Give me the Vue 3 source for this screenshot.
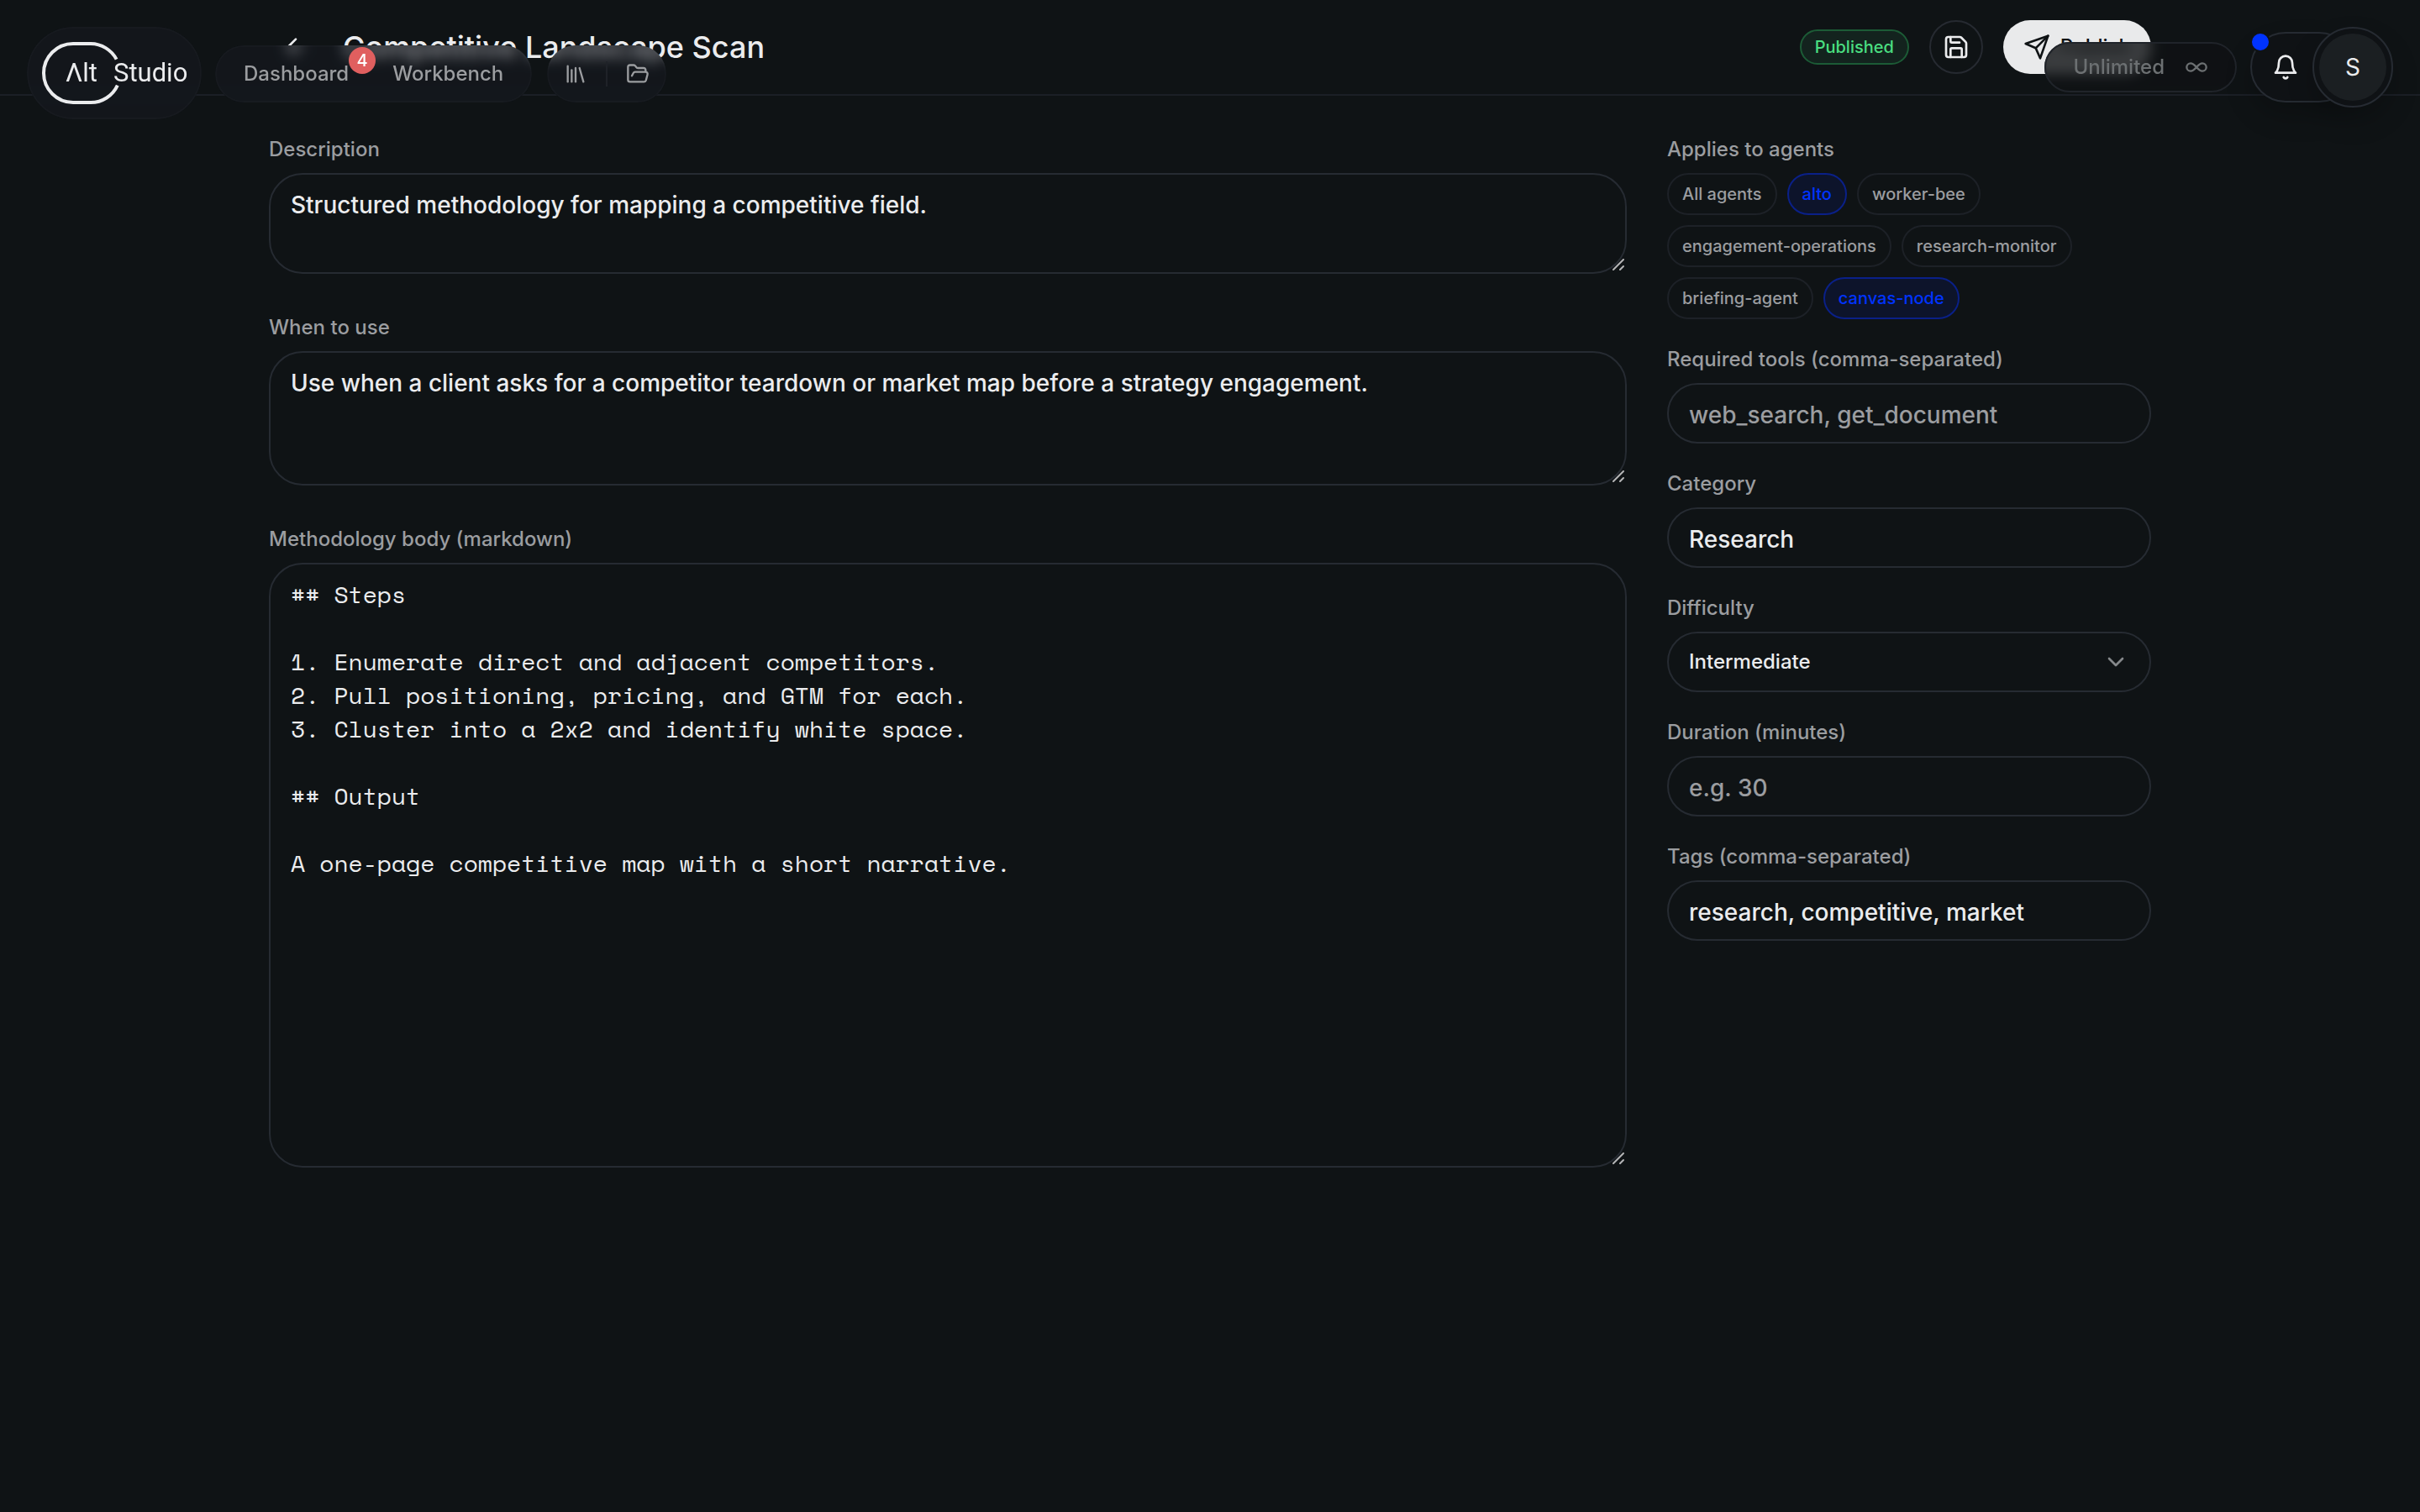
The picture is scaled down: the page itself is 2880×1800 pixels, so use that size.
<template>
  <div class="page">
    <header class="page-header">
      <div class="container header-row">
        <button type="button" class="back-btn" aria-label="Back">
          <svg class="icon-md" viewBox="0 0 24 24"><path d="m12 19-7-7 7-7" /><path d="M19 12H5" /></svg>
        </button>
        <h1 class="title">{{ skill.title }}</h1>
        <span class="status">Published</span>
        <button type="button" class="save-btn" aria-label="Save">
          <svg class="icon-md" viewBox="0 0 24 24">
            <path d="M15.2 3a2 2 0 0 1 1.4.6l3.8 3.8a2 2 0 0 1 .6 1.4V19a2 2 0 0 1-2 2H5a2 2 0 0 1-2-2V5a2 2 0 0 1 2-2z" />
            <path d="M17 21v-7a1 1 0 0 0-1-1H8a1 1 0 0 0-1 1v7" />
            <path d="M7 3v4a1 1 0 0 0 1 1h7" />
          </svg>
        </button>
        <button type="button" class="publish-btn">
          <svg class="icon-md" viewBox="0 0 24 24"><path d="m22 2-7 20-4-9-9-4Z" /><path d="M22 2 11 13" /></svg>
          Publish
        </button>
      </div>
    </header>

    <main class="container editor">
      <section class="main-col">
        <div v-for="area in areas" :key="area.key" class="field">
          <label :for="area.key">{{ area.label }}</label>
          <div class="area-wrap">
            <textarea
              :id="area.key"
              v-model="skill[area.key]"
              :class="'area-' + area.key"
              spellcheck="false"
            ></textarea>
            <svg class="grip" viewBox="0 0 14 14"><path d="M1 13 13 1M9 13l4-4" /></svg>
          </div>
        </div>
      </section>

      <aside class="side-col">
        <div class="field" role="group" aria-labelledby="agents-label">
          <span id="agents-label" class="field-label">Applies to agents</span>
          <div class="chips">
            <button
              v-for="agent in agents"
              :key="agent"
              type="button"
              class="chip"
              :class="{ active: selected.includes(agent) }"
              :aria-pressed="selected.includes(agent)"
              @click="toggleAgent(agent)"
            >{{ agent }}</button>
          </div>
        </div>
        <div class="field">
          <label for="tools">Required tools (comma-separated)</label>
          <input id="tools" v-model="skill.tools" type="text" placeholder="web_search, get_document" />
        </div>
        <div class="field">
          <label for="category">Category</label>
          <input id="category" v-model="skill.category" type="text" />
        </div>
        <div class="field">
          <label for="difficulty">Difficulty</label>
          <div class="select-wrap">
            <select id="difficulty" v-model="skill.difficulty">
              <option v-for="level in levels" :key="level">{{ level }}</option>
            </select>
            <svg class="icon-md chevron" viewBox="0 0 24 24"><path d="m6 9 6 6 6-6" /></svg>
          </div>
        </div>
        <div class="field">
          <label for="duration">Duration (minutes)</label>
          <input id="duration" v-model="skill.duration" type="text" inputmode="numeric" placeholder="e.g. 30" />
        </div>
        <div class="field">
          <label for="tags">Tags (comma-separated)</label>
          <input id="tags" v-model="skill.tags" type="text" />
        </div>
      </aside>
    </main>

    <!-- floating navigation -->
    <div class="float-left">
      <a href="#" class="glass logo">
        <svg viewBox="0 0 204 106">
          <path class="ring" d="M104.6 36.6A35 35 0 0 0 74 18H53a35 35 0 0 0 0 70h21A35 35 0 0 0 105.8 67.6" />
          <text x="44" y="63">Λlt</text>
          <text x="101" y="63">Studio</text>
        </svg>
      </a>
      <div class="float-group">
        <nav class="glass nav">
          <a href="#" class="nav-link">Dashboard<span class="badge">4</span></a>
          <a href="#" class="nav-link">Workbench</a>
        </nav>
        <div class="glass tools">
          <button type="button" class="tool-btn" aria-label="Library">
            <svg class="icon-sm" viewBox="0 0 24 24"><path d="m16 6 4 14" /><path d="M12 6v14" /><path d="M8 8v12" /><path d="M4 4v16" /></svg>
          </button>
          <span class="divider"></span>
          <button type="button" class="tool-btn" aria-label="Files">
            <svg class="icon-sm" viewBox="0 0 24 24">
              <path d="m6 14 1.5-2.9A2 2 0 0 1 9.24 10H20a2 2 0 0 1 1.94 2.5l-1.54 6a2 2 0 0 1-1.95 1.5H4a2 2 0 0 1-2-2V5a2 2 0 0 1 2-2h3.9a2 2 0 0 1 1.69.9l.81 1.2a2 2 0 0 0 1.67.9H18a2 2 0 0 1 2 2v2" />
            </svg>
          </button>
        </div>
      </div>
    </div>

    <div class="float-right">
      <div class="glass usage">
        <span>Unlimited</span>
        <svg class="icon-sm" viewBox="0 0 24 24"><path d="M6 16c5 0 7-8 12-8a4 4 0 0 1 0 8c-5 0-7-8-12-8a4 4 0 1 0 0 8" /></svg>
      </div>
      <div class="account">
        <button type="button" class="bell" aria-label="Notifications">
          <svg class="icon-md" viewBox="0 0 24 24"><path d="M6 8a6 6 0 0 1 12 0c0 7 3 9 3 9H3s3-2 3-9" /><path d="M10.3 21a1.94 1.94 0 0 0 3.4 0" /></svg>
          <span class="dot"></span>
        </button>
        <button type="button" class="avatar"><span>S</span></button>
      </div>
    </div>
  </div>
</template>

<script setup>
import { reactive, ref } from 'vue'

const skill = reactive({
  title: 'Competitive Landscape Scan',
  description: 'Structured methodology for mapping a competitive field.',
  usage: 'Use when a client asks for a competitor teardown or market map before a strategy engagement.',
  body: `## Steps

1. Enumerate direct and adjacent competitors.
2. Pull positioning, pricing, and GTM for each.
3. Cluster into a 2x2 and identify white space.

## Output

A one-page competitive map with a short narrative.`,
  tools: '',
  category: 'Research',
  difficulty: 'Intermediate',
  duration: '',
  tags: 'research, competitive, market'
})

const areas = [
  { key: 'description', label: 'Description' },
  { key: 'usage', label: 'When to use' },
  { key: 'body', label: 'Methodology body (markdown)' }
]

const levels = ['Intermediate']

const agents = [
  'All agents',
  'alto',
  'worker-bee',
  'engagement-operations',
  'research-monitor',
  'briefing-agent',
  'canvas-node'
]
const selected = ref(['alto', 'canvas-node'])

const toggleAgent = (agent) => {
  selected.value = selected.value.includes(agent)
    ? selected.value.filter(a => a !== agent)
    : [...selected.value, agent]
}
</script>

<style>
body {
  background: #0f1315;
}
</style>

<style scoped>
.page {
  min-height: 100vh;
  background: #0f1315;
  color: #ebecee;
  font-family: Inter, "Liberation Sans", sans-serif;
  font-size: 24px;
  line-height: 32px;
}
.page * {
  box-sizing: border-box;
}
button,
input,
select,
textarea {
  font: inherit;
  color: inherit;
  margin: 0;
}
button {
  padding: 0;
  border: none;
  background: none;
  cursor: pointer;
}
a {
  color: inherit;
  text-decoration: none;
}
svg {
  fill: none;
  stroke: currentColor;
  stroke-width: 2;
  stroke-linecap: round;
  stroke-linejoin: round;
  flex: none;
}
.icon-sm {
  width: 28px;
  height: 28px;
}
.icon-md {
  width: 32px;
  height: 32px;
}
.container {
  width: 100%;
  max-width: 2240px;
  margin: 0 auto;
}

/* header */
.page-header {
  border-bottom: 2px solid #1b1f26;
}
.header-row {
  display: flex;
  align-items: center;
  gap: 24px;
  padding: 24px 0;
}
.back-btn,
.save-btn {
  display: flex;
  align-items: center;
  justify-content: center;
  width: 64px;
  height: 64px;
  border-radius: 50%;
}
.save-btn {
  border: 2px solid #262a31;
}
.title {
  flex: 1;
  margin: 0;
  font-size: 36px;
  line-height: 48px;
  font-weight: 500;
}
.status {
  padding: 4px 16px;
  border: 2px solid #1c5b36;
  border-radius: 24px;
  background: #13231e;
  color: #4ade80;
  font-size: 20px;
  line-height: 30px;
  font-weight: 500;
}
.publish-btn {
  display: flex;
  align-items: center;
  gap: 12px;
  height: 64px;
  padding: 0 24px;
  border-radius: 32px;
  background: #e9eaeb;
  color: #0f1315;
  font-weight: 500;
}

/* form */
.editor {
  display: grid;
  grid-template-columns: minmax(0, 1fr) 576px;
  gap: 48px;
  padding: 48px 0;
}
.main-col,
.side-col {
  display: flex;
  flex-direction: column;
}
.main-col {
  gap: 48px;
}
.side-col {
  gap: 32px;
}
.field {
  display: flex;
  flex-direction: column;
  gap: 12px;
}
.field label,
.field-label {
  color: #9b9da0;
  font-weight: 500;
}
.area-wrap,
.select-wrap {
  position: relative;
  display: flex;
}
textarea,
input,
select {
  width: 100%;
  border: 2px solid #262b32;
  background: transparent;
  outline: none;
  font-weight: 500;
}
textarea {
  display: block;
  padding: 16px 24px;
  border-radius: 40px;
  font-size: 28px;
  line-height: 40px;
  resize: vertical;
}
textarea::-webkit-resizer {
  background: transparent;
}
.area-description {
  height: 120px;
}
.area-usage {
  height: 160px;
}
.area-body {
  height: 720px;
  font-family: "Space Mono", "Liberation Mono", monospace;
  font-weight: 400;
}
.grip {
  position: absolute;
  right: 3px;
  bottom: 4px;
  width: 14px;
  height: 14px;
  color: #b4b5b6;
  pointer-events: none;
}
input,
select {
  height: 72px;
  padding: 0 24px;
  border-radius: 36px;
}
input {
  padding-top: 4px;
  font-size: 28px;
}
input::placeholder {
  color: #9b9da0;
  opacity: 1;
}
select {
  appearance: none;
}
.chevron {
  position: absolute;
  top: 20px;
  right: 26px;
  color: #85888b;
  pointer-events: none;
}
.chips {
  display: flex;
  flex-wrap: wrap;
  gap: 12px;
}
.chip {
  padding: 8px 16px;
  border: 2px solid #1d2127;
  border-radius: 25px;
  color: #9b9da0;
  font-size: 20px;
  line-height: 30px;
  font-weight: 500;
}
.chip.active {
  border-color: #0a2088;
  background: #0d142b;
  color: #0033ff;
}

/* floating bars */
.float-left,
.float-right {
  position: fixed;
  top: 32px;
  z-index: 10;
  display: flex;
  gap: 16px;
}
.float-left {
  left: 32px;
}
.float-right {
  right: 32px;
  align-items: center;
}
.float-group {
  display: flex;
  align-items: flex-start;
  gap: 18px;
  padding-top: 22px;
}
.glass {
  --line: rgba(255, 255, 255, 0.02);
  --tint: rgba(26, 28, 38, 0.4);
  position: relative;
  z-index: 0;
  border: 2px solid transparent;
  color: #9b9da0;
}
/* the blurred layer is larger than the pill and masked back, so its edges stay solid */
.glass::before {
  content: "";
  position: absolute;
  inset: -36px;
  z-index: -1;
  padding: 34px;
  border-radius: 999px;
  background: var(--tint);
  backdrop-filter: blur(8px);
  mask: linear-gradient(#000 0 0) content-box no-repeat;
  pointer-events: none;
}
.glass::after {
  content: "";
  position: absolute;
  inset: -2px;
  z-index: -1;
  border: 2px solid var(--line);
  border-radius: 999px;
}
.logo {
  width: 208px;
  height: 110px;
  border-radius: 55px;
  color: #ebecee;
}
.logo svg {
  display: block;
  width: 204px;
  height: 106px;
}
.logo .ring {
  stroke-width: 4;
  stroke-linecap: butt;
}
.logo text {
  fill: currentColor;
  stroke: none;
  font-family: Roboto, "Liberation Sans", sans-serif;
  font-size: 31px;
}
.nav,
.tools {
  display: flex;
  align-items: center;
  height: 68px;
  padding: 8px;
  border-radius: 34px;
}
.nav {
  gap: 4px;
}
.nav-link {
  position: relative;
  padding: 8px 24px;
  font-weight: 500;
}
.badge {
  position: absolute;
  top: -8px;
  right: -8px;
  width: 32px;
  height: 32px;
  border-radius: 50%;
  background: #e05f5f;
  color: #fff;
  font-size: 20px;
  text-align: center;
}
.tools {
  gap: 12px;
}
.tool-btn {
  display: flex;
  align-items: center;
  justify-content: center;
  width: 48px;
  height: 48px;
}
.divider {
  width: 2px;
  height: 30px;
  background: #1f2228;
}
.usage {
  --line: #20242a;
  --tint: rgba(15, 17, 20, 0.8);
  display: flex;
  align-items: center;
  gap: 24px;
  height: 60px;
  padding: 0 32px;
  border-radius: 30px;
  color: #6c7072;
  font-weight: 500;
}
.account {
  display: flex;
  align-items: center;
}
.bell {
  position: relative;
  display: flex;
  align-items: center;
  width: 124px;
  height: 84px;
  padding-left: 24px;
  border: 2px solid #262b32;
  border-radius: 42px;
  background: #0f1215;
  box-shadow: 0 16px 32px rgba(0, 0, 0, 0.2);
}
.dot {
  position: absolute;
  top: -2px;
  left: -2px;
  width: 24px;
  height: 24px;
  border: 2px solid #0f1315;
  border-radius: 50%;
  background: #0033ff;
}
.avatar {
  position: relative;
  width: 96px;
  height: 96px;
  margin-left: -50px;
  padding: 6px;
  border: 2px solid #262b32;
  border-radius: 50%;
  background: #0f1215;
  box-shadow: 0 16px 32px rgba(0, 0, 0, 0.2);
}
.avatar span {
  display: block;
  border-radius: 50%;
  background: #1b1f22;
  font-size: 28px;
  line-height: 80px;
}
</style>
